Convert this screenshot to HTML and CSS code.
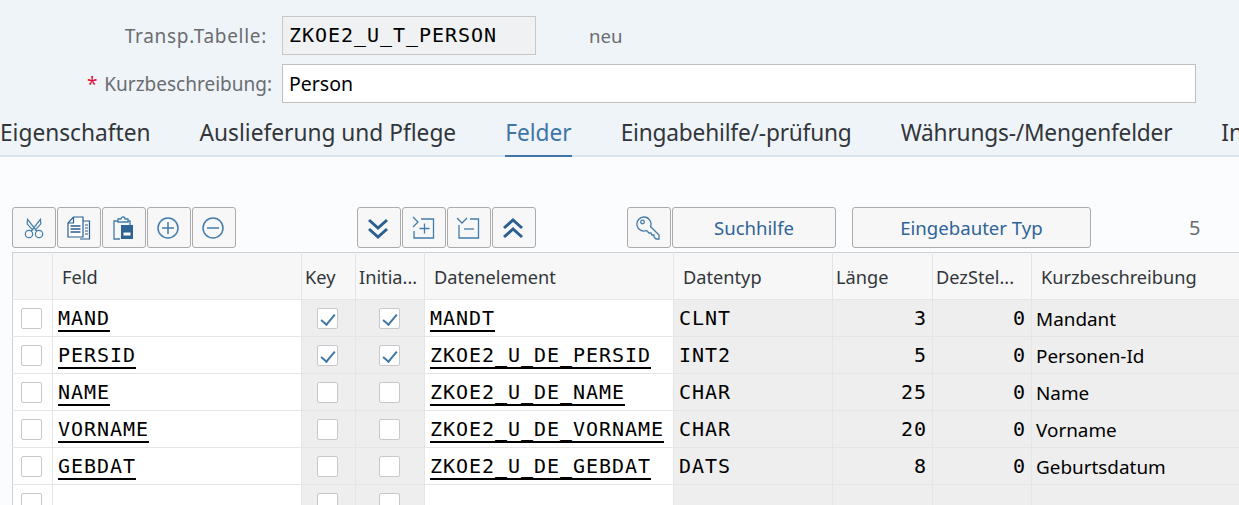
FILE: index.html
```html
<!DOCTYPE html>
<html lang="de">
    <head>
        <meta charset="utf-8" />
        <title>Transp.Tabelle ZKOE2_U_T_PERSON</title>
        <link rel="stylesheet" href="styles.css">
    </head>
    <body>
        <div class="page">
            <header class="head">
                <div class="form">
                    <div class="form-row first">
                        <label class="form-label">Transp.Tabelle:</label>
                        <div class="input readonly mono">ZKOE2_U_T_PERSON</div>
                        <span class="status">neu</span>
                    </div>
                    <div class="form-row second">
                        <label class="form-label"><span class="req">*</span> Kurzbeschreibung:</label>
                        <div class="input wide">Person</div>
                    </div>
                </div>
                <nav class="tabs">
                    <span class="tab">Eigenschaften</span>
                    <span class="tab">Auslieferung und Pflege</span>
                    <span class="tab active">Felder</span>
                    <span class="tab narrow">Eingabehilfe/-prüfung</span>
                    <span class="tab narrow">Währungs-/Mengenfelder</span>
                    <span class="tab">Indizes</span>
                </nav>
            </header>

            <div class="toolbar">
                <div class="group">
                    <button class="btn icon">
                        <svg width="22" height="22" viewBox="0 0 24 24" fill="none" stroke="#427cac" stroke-width="1.3"><circle cx="6.5" cy="18.5" r="4"/><circle cx="17.5" cy="18.5" r="4"/><path d="M9 15.5 19 2.5l.5 5L13 14.5M15 15.5 5 2.5l-.5 5L11 14.5"/></svg>
                    </button>
                    <button class="btn icon">
                        <svg width="24" height="24" viewBox="0 0 24 24" fill="none" stroke="#2b5f8f" stroke-width="1.2"><path d="M15 5h7.500v18H13"/><path d="M18 9h3M18 12h3M18 15h3M18 18h3" stroke-width="1"/><path d="M6.500 1H16v20H1V7z" fill="#fff"/><path d="M6.500 1v6H1" /><path d="M3.500 10h10M3.500 13h10M3.500 16h10" stroke-width="1.400"/></svg>
                    </button>
                    <button class="btn icon">
                        <svg width="24" height="24" viewBox="0 0 24 24" fill="none" stroke="#427cac" stroke-width="1.3"><path d="M8 23H2V5h16v4"/><path d="M6 5V3h3a2 2 0 0 1 4 0h3v3H6z" fill="#fff"/><rect x="9" y="9" width="12" height="14" fill="#2f6497" stroke="none"/><path d="M11.500 16.500h7v3h-7z" fill="#fff" stroke="none"/></svg>
                    </button>
                    <button class="btn icon nudge">
                        <svg width="24" height="24" viewBox="0 0 24 24" fill="none" stroke="#427cac" stroke-width="1.500"><circle cx="12" cy="12" r="10"/><path d="M12 6v12M6 12h12"/></svg>
                    </button>
                    <button class="btn icon nudge">
                        <svg width="24" height="24" viewBox="0 0 24 24" fill="none" stroke="#427cac" stroke-width="1.500"><circle cx="12" cy="12" r="10"/><path d="M6 12h12"/></svg>
                    </button>
                </div>
                <div class="group second-group">
                    <button class="btn icon nudge">
                        <svg width="24" height="24" viewBox="0 0 24 24" fill="none" stroke="#2b5f8f" stroke-width="3"><path d="M3 4l9 8 9-8M3 13l9 8 9-8"/></svg>
                    </button>
                    <button class="btn icon nudge">
                        <svg width="24" height="24" viewBox="0 0 24 24" fill="none" stroke="#427cac" stroke-width="1.300"><path d="M2 1l5 5-5 5M10 3h12.500v19H3v-7"/><path d="M8.500 12.500h10M13.500 7.500v10"/></svg>
                    </button>
                    <button class="btn icon nudge">
                        <svg width="24" height="24" viewBox="0 0 24 24" fill="none" stroke="#427cac" stroke-width="1.300"><path d="M1 2l5 5 5-5M14 3h8.500v19H3V9"/><path d="M8 13h10"/></svg>
                    </button>
                    <button class="btn icon nudge">
                        <svg width="24" height="24" viewBox="0 0 24 24" fill="none" stroke="#2b5f8f" stroke-width="3"><path d="M3 12l9-8 9 8M3 21l9-8 9 8"/></svg>
                    </button>
                </div>
                <div class="group third-group">
                    <button class="btn icon nudge">
                        <svg width="24" height="24" viewBox="0 0 24 24" fill="none" stroke="#427cac" stroke-width="1.300"><path d="M8 1a7 7 0 0 1 6.500 9.500l8.500 8.500v4h-3l-2-2v-2h-2l-1-2h-2l-2.500-2.500A7 7 0 1 1 8 1z"/><circle cx="6.500" cy="6" r="1.800"/></svg>
                    </button>
                    <button class="btn text suchhilfe">Suchhilfe</button>
                    <button class="btn text typ">Eingebauter Typ</button>
                </div>
                <span class="count">5</span>
            </div>

            <table class="grid">
                <colgroup>
                    <col class="c-sel"><col class="c-feld"><col class="c-key"><col class="c-init"><col class="c-elem"><col class="c-typ"><col class="c-len"><col class="c-dez"><col class="c-desc">
                </colgroup>
                <thead>
                    <tr>
                        <th></th>
                        <th class="pad-feld">Feld</th>
                        <th class="split tight">Key</th>
                        <th class="tight">Initia...</th>
                        <th>Datenelement</th>
                        <th>Datentyp</th>
                        <th class="tight">Länge</th>
                        <th class="tight">DezStel...</th>
                        <th>Kurzbeschreibung</th>
                    </tr>
                </thead>
                <tbody>
                    <tr>
                        <td class="sel"><span class="box"></span></td>
                        <td class="mono"><a>MAND</a></td>
                        <td class="split gray chk"><span class="box on"></span></td>
                        <td class="gray chk"><span class="box on"></span></td>
                        <td class="mono"><a>MANDT</a></td>
                        <td class="gray mono">CLNT</td>
                        <td class="gray mono num">3</td>
                        <td class="gray mono num">0</td>
                        <td class="gray desc">Mandant</td>
                    </tr>
                    <tr>
                        <td class="sel"><span class="box"></span></td>
                        <td class="mono"><a>PERSID</a></td>
                        <td class="split gray chk"><span class="box on"></span></td>
                        <td class="gray chk"><span class="box on"></span></td>
                        <td class="mono"><a>ZKOE2_U_DE_PERSID</a></td>
                        <td class="gray mono">INT2</td>
                        <td class="gray mono num">5</td>
                        <td class="gray mono num">0</td>
                        <td class="gray desc">Personen-Id</td>
                    </tr>
                    <tr>
                        <td class="sel"><span class="box"></span></td>
                        <td class="mono"><a>NAME</a></td>
                        <td class="split gray chk"><span class="box"></span></td>
                        <td class="gray chk"><span class="box"></span></td>
                        <td class="mono"><a>ZKOE2_U_DE_NAME</a></td>
                        <td class="gray mono">CHAR</td>
                        <td class="gray mono num">25</td>
                        <td class="gray mono num">0</td>
                        <td class="gray desc">Name</td>
                    </tr>
                    <tr>
                        <td class="sel"><span class="box"></span></td>
                        <td class="mono"><a>VORNAME</a></td>
                        <td class="split gray chk"><span class="box"></span></td>
                        <td class="gray chk"><span class="box"></span></td>
                        <td class="mono"><a>ZKOE2_U_DE_VORNAME</a></td>
                        <td class="gray mono">CHAR</td>
                        <td class="gray mono num">20</td>
                        <td class="gray mono num">0</td>
                        <td class="gray desc">Vorname</td>
                    </tr>
                    <tr>
                        <td class="sel"><span class="box"></span></td>
                        <td class="mono"><a>GEBDAT</a></td>
                        <td class="split gray chk"><span class="box"></span></td>
                        <td class="gray chk"><span class="box"></span></td>
                        <td class="mono"><a>ZKOE2_U_DE_GEBDAT</a></td>
                        <td class="gray mono">DATS</td>
                        <td class="gray mono num">8</td>
                        <td class="gray mono num">0</td>
                        <td class="gray desc">Geburtsdatum</td>
                    </tr>
                    <tr>
                        <td class="sel"><span class="box"></span></td>
                        <td></td>
                        <td class="split gray chk"><span class="box"></span></td>
                        <td class="gray chk"><span class="box"></span></td>
                        <td></td>
                        <td class="gray"></td>
                        <td class="gray"></td>
                        <td class="gray"></td>
                        <td class="gray"></td>
                    </tr>
                </tbody>
            </table>
        </div>
    </body>
</html>
```

FILE: styles.css
```css
* {
    box-sizing: border-box;
}

html, body {
    margin: 0;
    overflow: hidden;
}

body {
    background-color: #fbfcfe;
    font-family: "Noto Sans", "Open Sans", sans-serif;
    color: #32363a;
}

.page {
    width: 1239px;
    height: 505px;
    overflow: hidden;
}

.mono {
    font-family: "DejaVu Sans Mono", "Liberation Mono", monospace;
    font-size: 20px;
    letter-spacing: 0.96px;
    color: #000;
}

/* top part */
.head {
    background-color: #eff4f9;
    border-bottom: 2px solid #dae5ef;
    height: 157px;
    padding-top: 16px;
}

.form-row {
    display: flex;
    align-items: center;
    height: 39px;
    margin-bottom: 9px;
}

.form-label {
    width: 282px;
    padding-right: 15px;
    text-align: right;
    font-size: 19px;
    letter-spacing: 0.7px;
    color: #6a6d70;
}

.second .form-label {
    padding-right: 10px;
    letter-spacing: 0;
}

.req {
    margin-right: 2px;
    color: #e0103a;
}

.input {
    height: 39px;
    line-height: 37px;
    padding-left: 6px;
    border: 1px solid #bfbfbf;
    background-color: #fff;
    font-size: 19.5px;
    color: #000;
}

.input.mono {
    font-size: 20px;
}

.readonly {
    width: 254px;
    background-color: #eff1f3;
    border-color: #c6c9cc;
}

.wide {
    width: 914px;
}

.status {
    margin-left: 53px;
    font-size: 18.6px;
    color: #6a6d70;
}

.tabs {
    display: flex;
    gap: 49px;
    height: 45px;
    margin-top: 1px;
    white-space: nowrap;
    font-size: 22.7px;
    overflow: hidden;
}

.tab {
    height: 45px;
    line-height: 41px;
}

.tab.narrow {
    letter-spacing: -0.2px;
}

.tab.active {
    color: #3f76a5;
    border-bottom: 2px solid #3f76a5;
}

/* toolbar */
.toolbar {
    display: flex;
    align-items: center;
    height: 41px;
    margin: 50px 0 4px 12px;
}

.group {
    display: flex;
    gap: 1px;
}

.second-group {
    margin-left: 121px;
}

.third-group {
    margin-left: 91px;
}

.btn {
    height: 41px;
    padding: 0;
    display: flex;
    align-items: center;
    justify-content: center;
    background-color: #f7f7f7;
    border: 1px solid #ababab;
    border-radius: 3px;
    font-family: inherit;
    font-size: 18.6px;
    color: #2f6497;
}

.btn.icon {
    width: 44px;
}

.btn.nudge {
    padding-right: 2px;
}

.suchhilfe {
    width: 164px;
}

.typ {
    width: 239px;
    margin-left: 15px;
}

.count {
    margin-left: 98px;
    font-size: 20px;
    color: #6a6d70;
}

/* field table */
.grid {
    margin-left: 12px;
    width: 1227px;
    table-layout: fixed;
    border-collapse: collapse;
    border-top: 1px solid #d0d0d0;
    border-left: 1px solid #d0d0d0;
}

.c-sel { width: 40px; }
.c-feld { width: 249px; }
.c-key { width: 54px; }
.c-init { width: 69px; }
.c-elem { width: 249px; }
.c-typ { width: 159px; }
.c-len { width: 100px; }
.c-dez { width: 99px; }
.c-desc { width: 208px; }

.grid th {
    height: 47px;
    padding: 2px 0 0 9px;
    background-color: #f7f7f7;
    border-right: 1px solid #e5e5e5;
    border-bottom: 1px solid #e5e5e5;
    font-size: 18.2px;
    font-weight: 400;
    text-align: left;
    white-space: nowrap;
    overflow: hidden;
    color: #32363a;
}

.grid th.tight {
    padding-left: 3px;
}

.grid td {
    height: 37px;
    padding: 0 0 0 5px;
    background-color: #fff;
    border-right: 1px solid #e5e5e5;
    border-bottom: 1px solid #e5e5e5;
    white-space: nowrap;
    overflow: hidden;
}

.grid td.gray {
    background-color: #eee;
}

.grid .split {
    border-left: 1px solid #999;
}

.grid a {
    border-bottom: 2px solid #000;
    color: #000;
}

.grid td.num {
    text-align: right;
    padding-right: 5px;
}

.grid td.desc {
    padding: 2px 0 0 4px;
    font-size: 18.9px;
    color: #000;
}

.grid td.sel,
.grid td.chk {
    padding: 0 2px 0 0;
    text-align: center;
    line-height: 0;
}

.box {
    display: inline-block;
    position: relative;
    width: 21px;
    height: 21px;
    background-color: #fff;
    border: 1px solid #c8c8cc;
    border-radius: 2px;
}

.box.on::after {
    content: "";
    position: absolute;
    left: 6px;
    top: 2px;
    width: 6px;
    height: 12px;
    border-right: 2px solid #3f76a5;
    border-bottom: 2px solid #3f76a5;
    transform: rotate(40deg);
}
```
